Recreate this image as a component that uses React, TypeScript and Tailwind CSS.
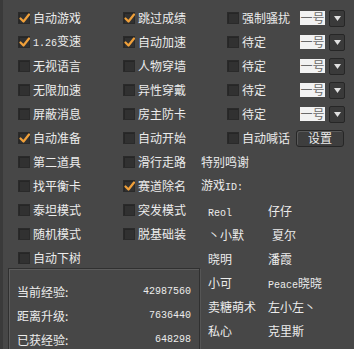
import React from "react";

const CJK = { fontFamily: '"Noto Sans CJK SC", "Noto Sans", sans-serif' };
const MONO = { fontFamily: '"Liberation Mono", "DejaVu Sans Mono", monospace' };

function Box({ checked }: { checked?: boolean }) {
  return (
    <span className="relative w-[12px] h-[12px] shrink-0 bg-[#313131] border border-[#2a2a2a] shadow-[inset_1px_1px_0_#262626]">
      {checked && (
        <svg className="absolute left-[0px] top-[0px]" width="11" height="11" viewBox="0 0 11 11">
          <polyline points="1.5,5.5 4.5,8.5 10,1.5" fill="none" stroke="#f0a03a" strokeWidth="2.2" strokeLinecap="round" strokeLinejoin="round" />
        </svg>
      )}
    </span>
  );
}

function Label({ text }: { text: string }) {
  // render latin/digit parts in mono
  const parts = text.split(/([A-Za-z0-9.:]+)/).filter(Boolean);
  return (
    <span className="text-[12px] leading-none text-[#ececec] whitespace-nowrap">
      {parts.map((p, i) =>
        /^[A-Za-z0-9.:]+$/.test(p) ? (
          <span key={i} className="text-[10px]" style={MONO}>{p}</span>
        ) : (
          <span key={i} style={CJK}>{p}</span>
        )
      )}
    </span>
  );
}

function Check({ text, checked }: { text: string; checked?: boolean }) {
  return (
    <div className="h-[24px] flex items-center gap-[3px]">
      <Box checked={checked} />
      <Label text={text} />
    </div>
  );
}

function Dropdown() {
  return (
    <div className="flex items-center gap-[4px]">
      <div className="w-[25px] h-[14px] bg-[#f2f2f2] flex items-center justify-center">
        <span className="text-[12px] leading-none text-[#6a6a6a]" style={CJK}>一号</span>
      </div>
      <div className="w-[16px] h-[17px] bg-[#3a3a3a] border border-[#262626] rounded-[2px] flex items-center justify-center">
        <svg width="7" height="5" viewBox="0 0 7 5"><polygon points="0,0 7,0 3.5,5" fill="#e0e0e0" /></svg>
      </div>
    </div>
  );
}

const col1: [string, boolean][] = [
  ["自动游戏", true], ["1.26变速", true], ["无视语言", false], ["无限加速", false], ["屏蔽消息", false],
  ["自动准备", true], ["第二道具", false], ["找平衡卡", false], ["泰坦模式", false], ["随机模式", false], ["自动下树", false],
];
const col2: [string, boolean][] = [
  ["跳过成绩", true], ["自动加速", true], ["人物穿墙", false], ["异性穿戴", false], ["房主防卡", false],
  ["自动开始", false], ["滑行走路", false], ["赛道除名", true], ["突发模式", false], ["脱基础装", false],
];
const names: [string, string][] = [
  ["Reol", "仔仔"], ["丶小默", "夏尔"], ["晓明", "潘霞"], ["小可", "Peace晓晓"], ["卖糖萌术", "左小左丶"], ["私心", "克里斯"],
];

function Stat({ label, value }: { label: string; value: string }) {
  return (
    <div className="h-[24px] flex items-center justify-between">
      <span className="text-[12px] leading-none text-[#ececec]" style={CJK}>{label}:</span>
      <span className="text-[10px] leading-none text-[#ececec]" style={MONO}>{value}</span>
    </div>
  );
}

export default function App() {
  return (
    <div className="w-[354px] h-[349px] bg-[#474747] overflow-hidden flex border-l-[3px] border-[#3a3a3a]">
      <div className="w-[198px] shrink-0 flex flex-col pt-[6px]">
        <div className="flex pl-[15px]">
          <div className="w-[105px]">
            {col1.map(([t, c]) => <Check key={t} text={t} checked={c} />)}
          </div>
          <div>
            {col2.map(([t, c]) => <Check key={t} text={t} checked={c} />)}
          </div>
        </div>
        <div className="mt-[-2px] ml-[5px] w-[192px] h-[100px] border border-[#303030] shadow-[inset_1px_1px_0_#5c5c5c,1px_1px_0_#555] px-[8px] pt-[11px]">
          <Stat label="当前经验" value="42987560" />
          <Stat label="距离升级" value="7636440" />
          <Stat label="已获经验" value="648298" />
        </div>
      </div>
      <div className="flex-1 flex flex-col pt-[6px]">
        <div className="pl-[26px]">
          <div className="h-[24px] flex items-center">
            <div className="w-[73px]"><Check text="强制骚扰" /></div>
            <Dropdown />
          </div>
          {[0, 1, 2, 3].map((i) => (
            <div key={i} className="h-[24px] flex items-center">
              <div className="w-[73px]"><Check text="待定" /></div>
              <Dropdown />
            </div>
          ))}
          <div className="h-[24px] flex items-center">
            <div className="w-[69px]"><Check text="自动喊话" /></div>
            <div className="w-[48px] h-[17px] rounded-[3px] border border-[#262626] bg-[#3e3e3e] shadow-[inset_1px_1px_0_#5a5a5a] flex items-center justify-center">
              <span className="text-[12px] leading-none text-[#ececec]" style={CJK}>设置</span>
            </div>
          </div>
        </div>
        <div className="h-[24px] flex items-center"><Label text="特别鸣谢" /></div>
        <div className="h-[24px] flex items-center"><Label text="游戏ID:" /></div>
        <div className="pl-[7px]">
          {names.map(([a, b]) => (
            <div key={a} className="h-[24px] flex items-center">
              <div className="w-[60px]"><Label text={a} /></div>
              <div className={a === "丶小默" ? "pl-[4px]" : ""}><Label text={b} /></div>
            </div>
          ))}
        </div>
      </div>
    </div>
  );
}
